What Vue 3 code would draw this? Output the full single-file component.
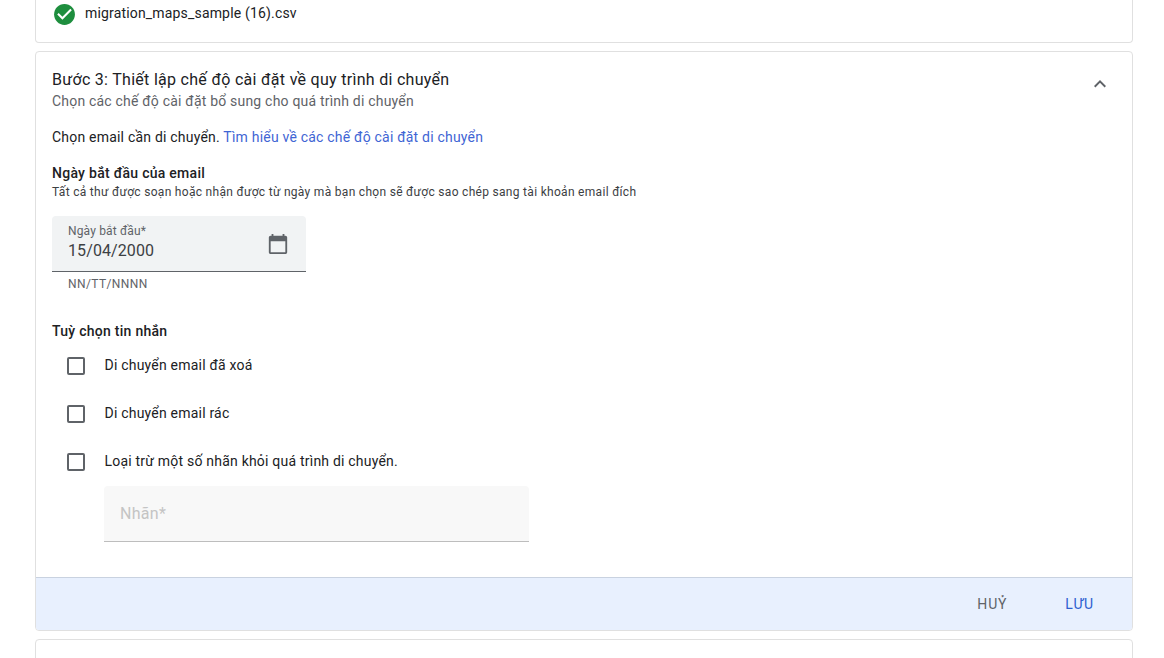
<script setup>
const options = [
  'Di chuyển email đã xoá',
  'Di chuyển email rác',
  'Loại trừ một số nhãn khỏi quá trình di chuyển.',
]
</script>

<template>
  <div class="page">
    <section class="card file-card">
      <svg class="check" width="25" height="25" viewBox="0 0 24 24">
        <path fill="#1e8e3e" d="M12 2C6.48 2 2 6.48 2 12s4.48 10 10 10 10-4.48 10-10S17.52 2 12 2z" />
        <path fill="#fff" d="M10 17l-5-5 1.41-1.41L10 14.17l7.59-7.59L19 8l-9 9z" />
      </svg>
      <span class="file-name">migration_maps_sample (16).csv</span>
    </section>

    <section class="card step-card">
      <header class="step-head">
        <div>
          <h2 class="step-title">Bước 3: Thiết lập chế độ cài đặt về quy trình di chuyển</h2>
          <p class="step-sub">Chọn các chế độ cài đặt bổ sung cho quá trình di chuyển</p>
        </div>
        <svg class="chevron" width="24" height="24" viewBox="0 0 24 24">
          <path fill="#5f6368" d="M12 8l-6 6 1.41 1.41L12 10.83l4.59 4.58L18 14z" />
        </svg>
      </header>

      <div class="step-body">
        <p class="intro">Chọn email cần di chuyển. <a class="link">Tìm hiểu về các chế độ cài đặt di chuyển</a></p>

        <h3 class="group-title">Ngày bắt đầu của email</h3>
        <p class="group-sub">Tất cả thư được soạn hoặc nhận được từ ngày mà bạn chọn sẽ được sao chép sang tài khoản email đích</p>

        <div class="date-field">
          <div>
            <div class="date-label">Ngày bắt đầu*</div>
            <div class="date-value">15/04/2000</div>
          </div>
          <svg class="calendar" width="22" height="22" viewBox="0 0 24 24">
            <path fill="#5f6368" d="M20 3h-1V1h-2v2H7V1H5v2H4c-1.1 0-2 .9-2 2v16c0 1.1.9 2 2 2h16c1.1 0 2-.9 2-2V5c0-1.1-.9-2-2-2zm0 18H4V9h16v12z" />
          </svg>
        </div>
        <div class="date-hint">NN/TT/NNNN</div>

        <h3 class="group-title options-title">Tuỳ chọn tin nhắn</h3>
        <ul class="options">
          <li v-for="option in options" :key="option" class="option">
            <span class="box"></span>
            <span class="option-text">{{ option }}</span>
          </li>
        </ul>

        <div class="label-field">Nhãn*</div>
      </div>

      <footer class="step-foot">
        <button class="btn cancel">HUỶ</button>
        <button class="btn save">LƯU</button>
      </footer>
    </section>

    <section class="card next-card"></section>
  </div>
</template>

<style>
html, body { margin: 0; background: #fff; overflow: hidden; }
</style>

<style scoped>
.page {
  box-sizing: border-box;
  width: 1164px;
  height: 658px;
  overflow: hidden;
  padding: 0 31px 0 35px;
  font-family: Roboto, "Noto Sans", sans-serif;
  color: #202124;
  display: flex;
  flex-direction: column;
  gap: 8px;
}
.card {
  box-sizing: border-box;
  flex: none;
  border: 1px solid #e0e0e0;
  border-radius: 4px;
  background: #fff;
}
.file-card {
  height: 43px;
  border-top: 0;
  border-radius: 0 0 4px 4px;
  display: flex;
  align-items: flex-start;
  padding: 2px 0 0 16px;
}
.check { display: block; }
.file-name {
  margin-left: 8px;
  font-size: 14px;
  line-height: 20px;
  margin-top: 1px;
  letter-spacing: 0.17px;
}
.step-card {
  height: 580px;
  display: flex;
  flex-direction: column;
  overflow: hidden;
}
.step-head {
  display: flex;
  justify-content: space-between;
  padding: 18px 20px 0 16px;
}
.step-title {
  margin: 0;
  font-size: 16px;
  font-weight: 400;
  line-height: 20px;
  letter-spacing: 0.29px;
}
.step-sub {
  margin: 1px 0 0;
  font-size: 14px;
  line-height: 20px;
  color: #5f6368;
  letter-spacing: 0.2px;
}
.chevron { margin-top: 2px; }
.step-body {
  flex: 1;
  padding: 0 16px;
}
.intro {
  margin: 16px 0 0;
  font-size: 14px;
  line-height: 20px;
  letter-spacing: 0.21px;
}
.link { color: #3f65d4; }
.group-title {
  margin: 16px 0 0;
  font-size: 14px;
  font-weight: 500;
  line-height: 20px;
  letter-spacing: 0.27px;
}
.group-sub {
  margin: 0;
  font-size: 12px;
  line-height: 18px;
  color: #3c4043;
  letter-spacing: 0.3px;
}
.date-field {
  box-sizing: border-box;
  width: 254px;
  height: 56px;
  margin-top: 15px;
  background: #f1f3f4;
  border-bottom: 1px solid #5f6368;
  border-radius: 4px 4px 0 0;
  padding: 8px 17px 0 16px;
  display: flex;
  justify-content: space-between;
}
.date-label {
  font-size: 12px;
  line-height: 14px;
  color: #5f6368;
  letter-spacing: 0.15px;
}
.date-value {
  font-size: 16px;
  line-height: 22px;
  margin-top: 2px;
  color: #3c4043;
  letter-spacing: 0.1px;
}
.calendar { margin-top: 9px; }
.date-hint {
  margin: 4px 0 0 16px;
  font-size: 12px;
  line-height: 16px;
  color: #5f6368;
  letter-spacing: 0.4px;
}
.options-title { margin-top: 29px; }
.options {
  list-style: none;
  margin: 0;
  padding: 0;
}
.option {
  display: flex;
  align-items: center;
  height: 48px;
  padding-left: 15px;
}
.box {
  box-sizing: border-box;
  width: 18px;
  height: 18px;
  margin-top: 2px;
  border: 2px solid #5f6368;
  border-radius: 2px;
}
.option-text {
  margin-left: 19.5px;
  font-size: 14px;
  line-height: 20px;
  letter-spacing: 0.21px;
}
.label-field {
  box-sizing: border-box;
  width: 425px;
  height: 56px;
  margin: 1px 0 0 52px;
  padding: 18px 16px 0;
  background: #f8f8f8;
  border-bottom: 1px solid #bdbdbd;
  border-radius: 4px 4px 0 0;
  font-size: 16px;
  line-height: 20px;
  color: #c4c4c4;
  letter-spacing: 0.3px;
}
.step-foot {
  height: 53px;
  flex: none;
  box-sizing: border-box;
  background: #e8f0fe;
  border-top: 1px solid #c9d2e0;
  display: flex;
  justify-content: flex-end;
  align-items: center;
  padding-right: 38px;
  gap: 58px;
}
.btn {
  border: 0;
  padding: 0;
  background: none;
  font-family: inherit;
  font-size: 14px;
  font-weight: 400;
  line-height: 20px;
  letter-spacing: 0.8px;
}
.cancel { color: #5f6368; }
.save { color: #2f5fd0; }
.next-card { height: 40px; }
</style>
